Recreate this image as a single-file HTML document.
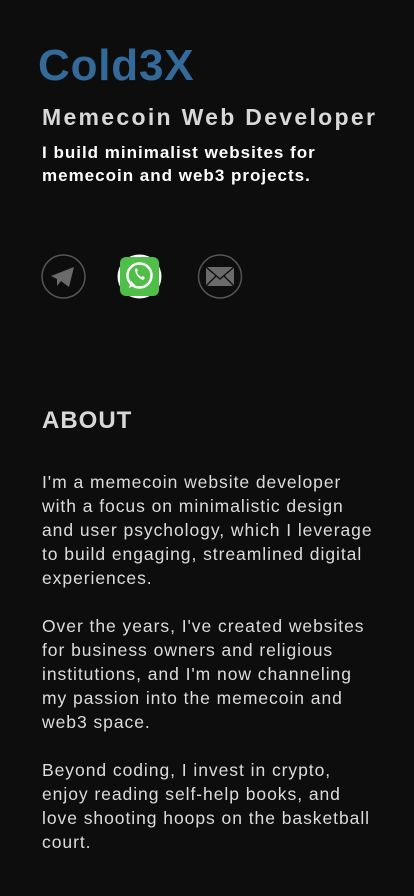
<!DOCTYPE html>
<html><head><meta charset="utf-8"><style>
html,body{margin:0;padding:0;background:#0d0d0d;width:414px;height:896px;overflow:hidden;font-family:"Liberation Sans",sans-serif}
.a{position:absolute;left:42px;white-space:nowrap}
</style></head><body>
<div class="a" style="left:38px;top:40px;font-size:44px;font-weight:bold;color:#336a9a;letter-spacing:0.8px;line-height:52px">Cold3X</div>
<div class="a" style="top:102px;font-size:23px;font-weight:bold;color:#d8d8d8;letter-spacing:2.3px;line-height:30px">Memecoin Web Developer</div>
<div class="a" style="top:141px;font-size:17px;font-weight:bold;color:#fff;line-height:23px;letter-spacing:1px">I build minimalist websites for<br>memecoin and web3 projects.</div>
<svg style="position:absolute;left:0;top:250px" width="414" height="55">
<circle cx="63.5" cy="26.5" r="21.5" fill="none" stroke="#555" stroke-width="1.5"/>
<path d="M51 26 L74 17 L69 37 L61 31 L57 36 L57 29 Z" fill="#6a6a6a"/>
<circle cx="139.5" cy="26.5" r="22" fill="#fff"/>
<rect x="120" y="7" width="39" height="39" rx="6" fill="#4fbf4a"/>
<circle cx="139.5" cy="25.5" r="12" fill="none" stroke="#fff" stroke-width="2.5"/>
<path d="M129 38 L131 31 L135 35 Z" fill="#fff"/>
<path d="M135 20 q1 7 8 10 l2 -2 l-2 -2 l-2 1 q-3 -2 -4 -5 l1 -2 l-2 -2 z" fill="#fff"/>
<circle cx="220" cy="26.5" r="21.5" fill="none" stroke="#555" stroke-width="1.5"/>
<rect x="206" y="17" width="28" height="19" fill="#6a6a6a"/>
<path d="M206 17 L220 29 L234 17 M206 36 L216 26 M234 36 L224 26" stroke="#0d0d0d" stroke-width="1.3" fill="none"/>
</svg>
<div class="a" style="top:406px;font-size:24px;font-weight:bold;color:#d8d8d8;letter-spacing:1px;line-height:30px">ABOUT</div>
<div class="a" style="top:470px;font-size:17.5px;color:#dcdcdc;line-height:24px;letter-spacing:0.95px">I'm a memecoin website developer<br>with a focus on minimalistic design<br>and user psychology, which I leverage<br>to build engaging, streamlined digital<br>experiences.<br><br>Over the years, I've created websites<br>for business owners and religious<br>institutions, and I'm now channeling<br>my passion into the memecoin and<br>web3 space.<br><br>Beyond coding, I invest in crypto,<br>enjoy reading self-help books, and<br>love shooting hoops on the basketball<br>court.</div>
</body></html>
